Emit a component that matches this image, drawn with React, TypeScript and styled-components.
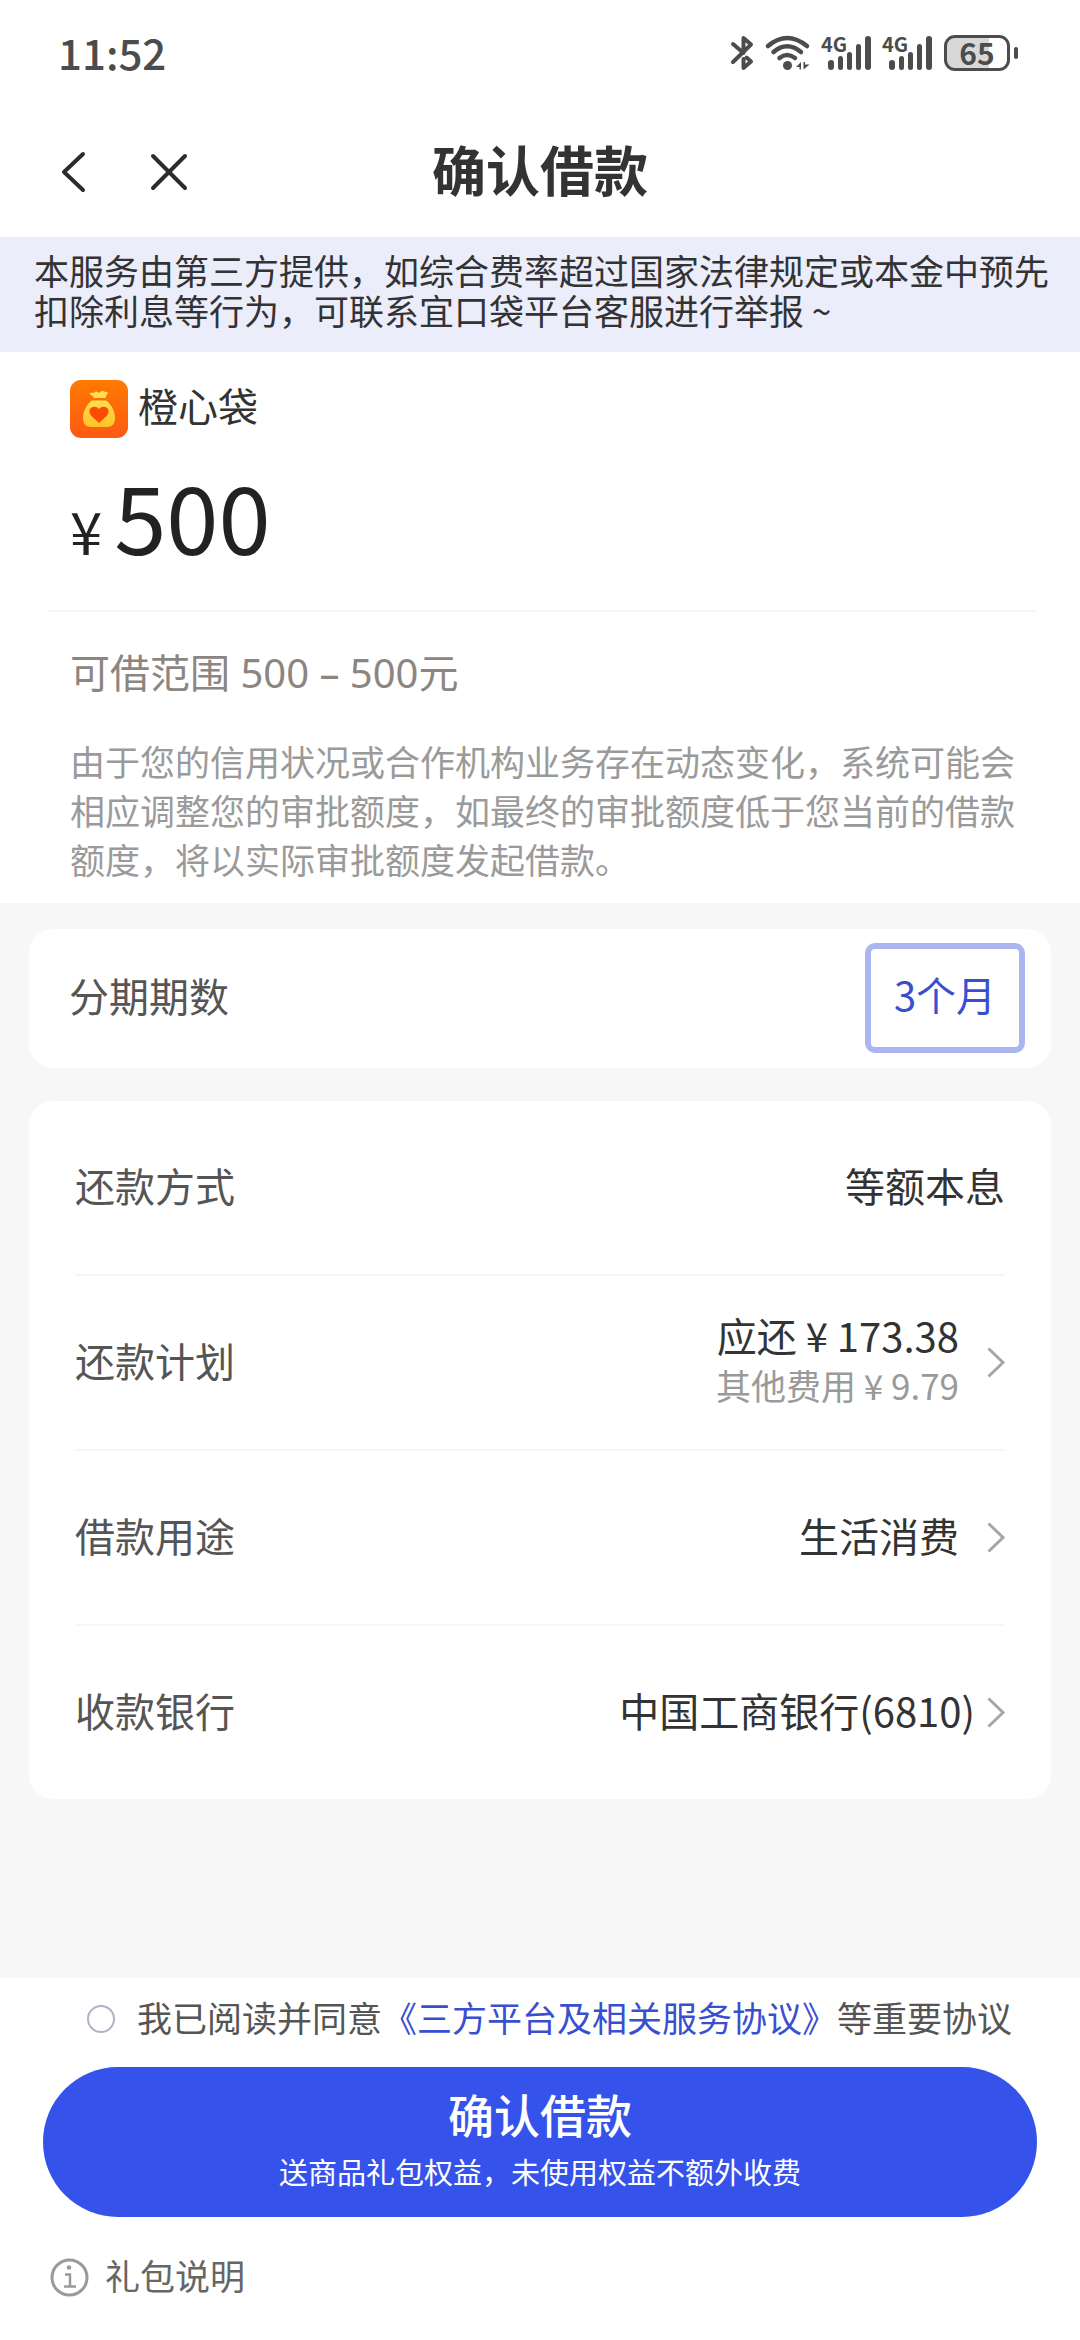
import React, { useState } from "react";
import styled, { createGlobalStyle } from "styled-components";

const GlobalStyle = createGlobalStyle`
  *, *::before, *::after { box-sizing: border-box; }
  body {
    margin: 0;
    background: #f7f7f7;
    font-family: "Noto Sans CJK SC", "Noto Sans", sans-serif;
    color: #333;
  }
  button {
    font: inherit;
    color: inherit;
    background: none;
    border: 0;
    padding: 0;
    cursor: pointer;
  }
  h1, p { margin: 0; font-weight: 400; }
  svg { display: block; flex: none; overflow: visible; }
`;

const Page = styled.div`
  display: flex;
  flex-direction: column;
  min-height: 100vh;
`;

const StatusBar = styled.div`
  display: flex;
  align-items: center;
  justify-content: space-between;
  height: 106px;
  padding: 0 62px 0 58px;
  background: #fff;
  color: #4c4c4c;
`;

const Clock = styled.time`
  font-size: 42px;
  line-height: 50px;
  font-weight: 500;
  padding-bottom: 2px;
`;

const StatusIcons = styled.div`
  display: flex;
  align-items: center;
  gap: 11px;
`;

const Battery = styled.div`
  display: flex;
  align-items: center;
  gap: 4px;
  margin-left: 1px;

  &::after {
    content: "";
    width: 4px;
    height: 12px;
    border-radius: 2px;
    background: #4c4c4c;
  }
`;

const BatteryBody = styled.span`
  display: flex;
  align-items: center;
  justify-content: center;
  width: 66px;
  height: 36px;
  padding-bottom: 2px;
  border: 3px solid #4c4c4c;
  border-radius: 11px;
  background: linear-gradient(to right, #d8d8d8 70%, #fff 70%);
  font-size: 30px;
  line-height: 30px;
  font-weight: 700;
`;

const Header = styled.header`
  display: grid;
  grid-template-columns: 1fr auto 1fr;
  align-items: center;
  height: 131px;
  padding: 0 60px;
  background: #fff;
`;

const HeaderActions = styled.div`
  display: flex;
  align-items: center;
  gap: 62px;
`;

const Title = styled.h1`
  font-size: 54px;
  line-height: 64px;
  font-weight: 700;
  padding-bottom: 6px;
`;

const Notice = styled.p`
  padding: 13px 28px 22px 34px;
  background: #ebedfb;
  font-size: 35px;
  line-height: 40px;
`;

const Summary = styled.section`
  padding: 28px 0 20px;
  background: #fff;
`;

const Brand = styled.div`
  display: flex;
  align-items: flex-start;
  gap: 10px;
  padding: 0 70px;
  font-size: 40px;
  line-height: 50px;
`;

const Amount = styled.div`
  display: flex;
  align-items: baseline;
  gap: 12px;
  padding: 26px 70px 46px;
  font-size: 94px;
  line-height: 100px;
  color: #222;
`;

const Currency = styled.span`
  font-size: 58px;
  line-height: 58px;
`;

const Divider = styled.hr`
  height: 2px;
  margin: 0 44px 0 48px;
  border: 0;
  background: #f6f6f6;
`;

const Range = styled.p`
  padding: 36px 70px 0;
  font-family: "Noto Sans", "Noto Sans CJK SC", sans-serif;
  font-size: 40px;
  line-height: 50px;
  color: #8c8580;
`;

const Hint = styled.p`
  padding: 38px 64px 0 70px;
  font-size: 35px;
  line-height: 49px;
  color: #9a9a9a;
`;

const Body = styled.main`
  flex: 1;
  display: flex;
  flex-direction: column;
  gap: 33px;
  padding: 26px 29px;
`;

const Card = styled.section`
  border-radius: 24px;
  background: #fff;
`;

const TermCard = styled(Card)`
  display: flex;
  align-items: center;
  justify-content: space-between;
  padding: 14px 26px 15px 40px;
`;

const DetailCard = styled(Card)`
  display: flex;
  flex-direction: column;
  padding: 0 46px;
`;

const Label = styled.span`
  padding-bottom: 6px;
  font-size: 40px;
  line-height: 50px;
  color: #555;
`;

const TermOption = styled.button`
  min-width: 160px;
  height: 110px;
  padding: 0 16px 8px;
  border: 6px solid #abb6f0;
  border-radius: 10px;
  font-size: 40px;
  line-height: 50px;
  color: #3a4fd0;
`;

const Row = styled.div`
  display: flex;
  align-items: center;
  justify-content: space-between;
  width: 100%;
  height: 175px;
  border-bottom: 2px solid #f6f6f6;
  text-align: left;

  &:last-child {
    height: 173px;
    border-bottom: 0;
  }
`;

const RowEnd = styled.span<{ $gap: number }>`
  display: flex;
  align-items: center;
  gap: ${(p) => p.$gap}px;
`;

const Value = styled.span`
  display: flex;
  flex-direction: column;
  align-items: flex-end;
  padding-bottom: 6px;
  font-size: 40px;
  line-height: 50px;
  color: #333;
`;

const SubValue = styled.span`
  font-size: 35px;
  line-height: 50px;
  color: #9a9a9a;
`;

const Footer = styled.footer`
  padding: 14px 43px 36px;
  background: #fff;
`;

const Agreement = styled.div`
  display: flex;
  align-items: center;
  gap: 22px;
  padding-left: 44px;
  font-size: 35px;
  line-height: 50px;
  color: #555;
  white-space: nowrap;
`;

const AgreeBox = styled.input`
  appearance: none;
  flex: none;
  width: 28px;
  height: 28px;
  margin: 4px 0 0;
  border: 2px solid #b2b2c6;
  border-radius: 50%;

  &:checked {
    border-color: #3552eb;
    background: #3552eb;
  }
`;

const AgreementLink = styled.a`
  color: #3a4fd0;
  text-decoration: none;
`;

const Submit = styled.button`
  display: flex;
  flex-direction: column;
  align-items: center;
  width: 100%;
  height: 150px;
  margin-top: 25px;
  padding-top: 17px;
  border-radius: 75px;
  background: #3552eb;
  color: #fff;
  font-size: 46px;
  line-height: 58px;
  font-weight: 500;
`;

const SubmitNote = styled.span`
  font-size: 29px;
  line-height: 58px;
  font-weight: 400;
`;

const GiftInfo = styled.button`
  display: flex;
  align-items: center;
  gap: 16px;
  margin-top: 33px;
  padding-left: 7px;
  font-size: 35px;
  line-height: 50px;
  color: #666;
`;

const GiftText = styled.span`
  padding-bottom: 4px;
`;

const BluetoothIcon = () => (
  <svg width="23" height="36" viewBox="0 0 23 36" fill="none" stroke="#4c4c4c" strokeWidth="4" strokeLinecap="round" strokeLinejoin="round">
    <path d="M2 9 L12.5 18 V3 L20 9.500 L2 27" />
    <path d="M12.500 24 V33 L20 26.500 L15.500 22.500" />
  </svg>
);

const WifiIcon = () => (
  <svg width="45" height="36" viewBox="0 0 45 36" fill="none" stroke="#4c4c4c" strokeWidth="4.500" strokeLinecap="round">
    <path d="M3 11 Q22 -5 42 11" />
    <path d="M8.500 17 Q22 5.500 36 17" />
    <path d="M14.500 23 Q22 17 30 23" />
    <circle cx="22.500" cy="30.500" r="4.500" fill="#4c4c4c" stroke="none" />
    <path d="M31 32 L36 27 V34.500 H34.500 V32 Z M38.500 34.500 V27 H40 V29.500 H44.500 Z" fill="#4c4c4c" stroke="none" />
  </svg>
);

const SignalIcon = () => (
  <svg width="50" height="36" viewBox="0 0 50 36" fill="#4c4c4c">
    <text x="0" y="17" fontSize="20" fontWeight="700">4G</text>
    <rect x="7" y="25" width="6" height="10" rx="3" />
    <rect x="17" y="21" width="5" height="14" rx="2.500" />
    <rect x="26" y="17" width="5" height="18" rx="2.500" />
    <rect x="35" y="9" width="5" height="26" rx="2.500" />
    <rect x="44" y="1" width="6" height="34" rx="3" />
  </svg>
);

const BackIcon = () => (
  <svg width="27" height="42" viewBox="0 0 27 42" fill="none" stroke="#2c2c2c" strokeWidth="4" strokeLinecap="round" strokeLinejoin="round">
    <path d="M23 3 L4 21 L23 39" />
  </svg>
);

const CloseIcon = () => (
  <svg width="40" height="40" viewBox="0 0 40 40" fill="none" stroke="#2c2c2c" strokeWidth="4" strokeLinecap="round">
    <path d="M4 4 L36 36 M36 4 L4 36" />
  </svg>
);

const BrandLogo = () => (
  <svg width="58" height="58" viewBox="0 0 58 58">
    <defs>
      <linearGradient id="tile" x1="0" y1="0" x2="0" y2="1">
        <stop offset="0" stopColor="#ff7a02" />
        <stop offset="1" stopColor="#fc5a12" />
      </linearGradient>
      <linearGradient id="bag" x1="0" y1="0" x2="0" y2="1">
        <stop offset="0" stopColor="#ffe04e" />
        <stop offset="1" stopColor="#ffc22a" />
      </linearGradient>
    </defs>
    <rect width="58" height="58" rx="11" fill="url(#tile)" />
    <path d="M20 14 C19 12.500 22 12.500 24 13 C26 10 28 12 29 13 C31 11 33 10.500 34 11.500 C35 12 37 11 38 13 C37 15 35.500 16 35.500 18 H23.500 C24 15.500 21 16 20 14 Z" fill="#ffe04e" />
    <path d="M22 20.500 H36 C41 24 45 31 45 38 C45 44 42 47 37 47 H21 C16 47 13 44 13 38 C13 31 17 24 22 20.500 Z" fill="url(#bag)" />
    <path d="M29 43 L21.500 36 C18.500 33 19 29 21.500 27.500 C24 26 27 26.500 29 29 C31 26.500 34 26 36.500 27.500 C39 29 39.500 33 36.500 36 Z" fill="#ff4a05" />
  </svg>
);

const ChevronIcon = () => (
  <svg width="18" height="31" viewBox="0 0 18 31" fill="none" stroke="#a6a6a6" strokeWidth="3">
    <path d="M1.500 1.500 L16 15.500 L1.500 29.500" />
  </svg>
);

const InfoIcon = () => (
  <svg width="39" height="39" viewBox="0 0 39 39" fill="none" stroke="#9a9a9a" strokeWidth="3">
    <circle cx="19.500" cy="19.500" r="17.500" />
    <circle cx="19" cy="9.500" r="2.300" fill="#9a9a9a" stroke="none" />
    <path d="M15 16.500 H20 V28.500 M14 28.500 H26" strokeWidth="2.500" />
  </svg>
);

export default function App() {
  const [agreed, setAgreed] = useState(false);

  return (
    <>
      <GlobalStyle />
      <Page>
        <StatusBar>
          <Clock>11:52</Clock>
          <StatusIcons>
            <BluetoothIcon />
            <WifiIcon />
            <SignalIcon />
            <SignalIcon />
            <Battery>
              <BatteryBody>65</BatteryBody>
            </Battery>
          </StatusIcons>
        </StatusBar>

        <Header>
          <HeaderActions>
            <button type="button" aria-label="返回">
              <BackIcon />
            </button>
            <button type="button" aria-label="关闭">
              <CloseIcon />
            </button>
          </HeaderActions>
          <Title>确认借款</Title>
        </Header>

        <Notice>
          本服务由第三方提供，如综合费率超过国家法律规定或本金中预先扣除利息等行为，可联系宜口袋平台客服进行举报 ~
        </Notice>

        <Summary>
          <Brand>
            <BrandLogo />
            橙心袋
          </Brand>
          <Amount>
            <Currency>¥</Currency>
            <span>500</span>
          </Amount>
          <Divider />
          <Range>可借范围 500 – 500元</Range>
          <Hint>
            由于您的信用状况或合作机构业务存在动态变化，系统可能会相应调整您的审批额度，如最终的审批额度低于您当前的借款额度，将以实际审批额度发起借款。
          </Hint>
        </Summary>

        <Body>
          <TermCard>
            <Label>分期期数</Label>
            <TermOption type="button" aria-pressed="true">
              3个月
            </TermOption>
          </TermCard>

          <DetailCard>
            <Row>
              <Label>还款方式</Label>
              <Value>等额本息</Value>
            </Row>
            <Row as="button" type="button">
              <Label>还款计划</Label>
              <RowEnd $gap={28}>
                <Value>
                  应还 ¥ 173.38
                  <SubValue>其他费用 ¥ 9.79</SubValue>
                </Value>
                <ChevronIcon />
              </RowEnd>
            </Row>
            <Row as="button" type="button">
              <Label>借款用途</Label>
              <RowEnd $gap={28}>
                <Value>生活消费</Value>
                <ChevronIcon />
              </RowEnd>
            </Row>
            <Row as="button" type="button">
              <Label>收款银行</Label>
              <RowEnd $gap={12}>
                <Value>中国工商银行(6810)</Value>
                <ChevronIcon />
              </RowEnd>
            </Row>
          </DetailCard>
        </Body>

        <Footer>
          <Agreement>
            <AgreeBox
              id="agree"
              type="checkbox"
              checked={agreed}
              onChange={(e) => setAgreed(e.target.checked)}
            />
            <label htmlFor="agree">
              我已阅读并同意<AgreementLink href="#agreement">《三方平台及相关服务协议》</AgreementLink>等重要协议
            </label>
          </Agreement>
          <Submit type="button">
            确认借款
            <SubmitNote>送商品礼包权益，未使用权益不额外收费</SubmitNote>
          </Submit>
          <GiftInfo type="button">
            <InfoIcon />
            <GiftText>礼包说明</GiftText>
          </GiftInfo>
        </Footer>
      </Page>
    </>
  );
}
